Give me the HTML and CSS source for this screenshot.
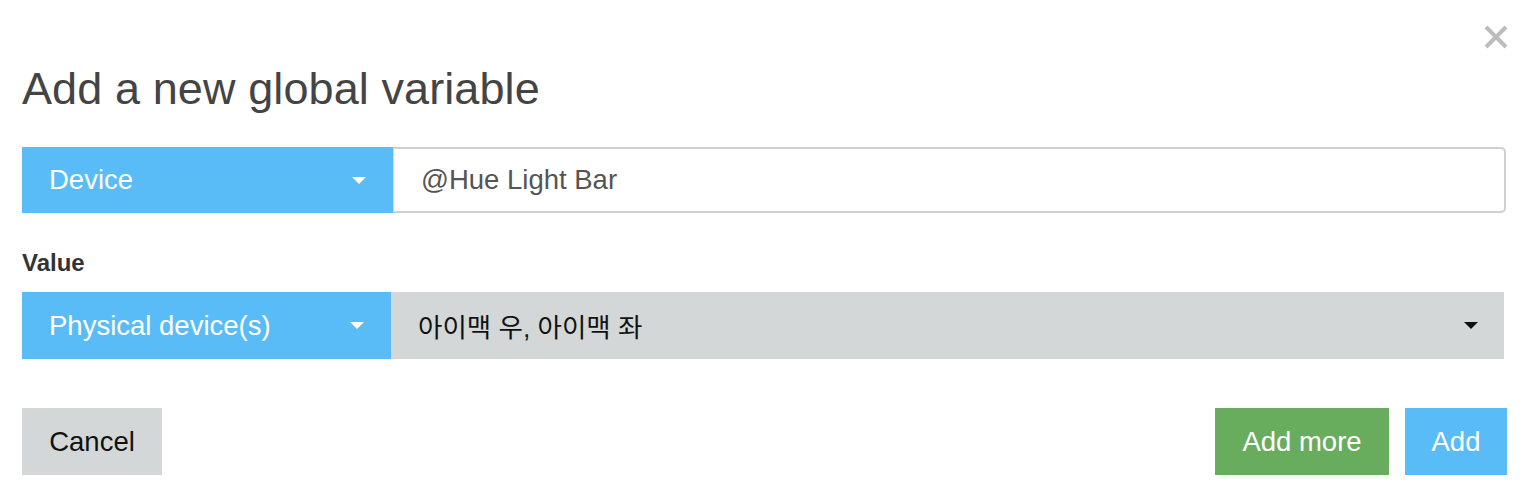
FILE: index.html
```html
<!DOCTYPE html>
<html>
<head>
<meta charset="utf-8">
<link rel="stylesheet" href="styles.css">
</head>
<body>
<div class="modal">
  <button class="close" aria-label="Close">
    <svg width="26" height="26" viewBox="0 0 26 26"><path d="M3 3 L23 23 M23 3 L3 23" stroke="#bdbdbd" stroke-width="4" stroke-linecap="butt"/></svg>
  </button>
  <h1 class="title">Add a new global variable</h1>
  <div class="row">
    <div class="select blue"><span>Device</span><span class="caret white"></span></div>
    <div class="input">@Hue Light Bar</div>
  </div>
  <div class="label">Value</div>
  <div class="row row2">
    <div class="select blue"><span>Physical device(s)</span><span class="caret white"></span></div>
    <div class="multi"><span>아이맥 우, 아이맥 좌</span><span class="caret dark"></span></div>
  </div>
  <div class="footer">
    <button class="btn gray">Cancel</button>
    <div class="right">
      <button class="btn green">Add more</button>
      <button class="btn blue">Add</button>
    </div>
  </div>
</div>
</body>
</html>
```
FILE: styles.css
```css
html, body { margin: 0; padding: 0; background: #fff; }
body { font-family: "Liberation Sans", Arial, "Noto Sans CJK KR", sans-serif; }
.modal { position: relative; padding: 0 20px 0 22px; width: 1484px; }
.close { position: absolute; top: 24px; right: 17px; border: 0; background: none; padding: 0; width: 26px; height: 26px; }
.close svg { display: block; }
.title { margin: 0 0 32px; padding-top: 63px; font-size: 45px; font-weight: normal; color: #444; line-height: 52px; letter-spacing: 0.1px; }
.row { display: flex; height: 66px; }
.select { width: 371px; flex: none; display: flex; align-items: center; justify-content: space-between; padding: 0 27px 0 27px; box-sizing: border-box; font-size: 27.5px; }
.blue { background: #5abcf7; color: #fff; }
.caret { width: 0; height: 0; border-left: 7px solid transparent; border-right: 7px solid transparent; border-top: 7px solid #fff; }
.caret.dark { border-top-color: #111; margin-right: 26px; }
.input { flex: 1; border: 2px solid #cfcfcf; border-left: 1px solid #d8d8d8; border-radius: 0 5px 5px 0; display: flex; align-items: center; padding-left: 27px; font-size: 27.5px; color: #555; box-sizing: border-box; }
.label { font-weight: bold; font-size: 24px; color: #333; margin-top: 36px; height: 43px; line-height: 28px; }
.row2 { height: 67px; }
.row2 .select { width: 369px; }
.multi { width: 1113px; flex: none; background: #d4d7d8; display: flex; align-items: center; justify-content: space-between; padding-left: 27px; box-sizing: border-box; font-size: 26.5px; color: #111; font-family: "Liberation Sans", "Noto Sans CJK KR", sans-serif; }
.footer { display: flex; justify-content: space-between; margin-top: 49px; }
.right { display: flex; gap: 16px; margin-right: -1px; }
.btn { border: 0; height: 67px; font-family: inherit; font-size: 27.5px; padding: 0; }
.btn.gray { background: #d4d7d8; color: #111; width: 140px; }
.btn.green { background: #68ad5e; color: #fff; width: 174px; }
.btn.blue { width: 102px; }
```
